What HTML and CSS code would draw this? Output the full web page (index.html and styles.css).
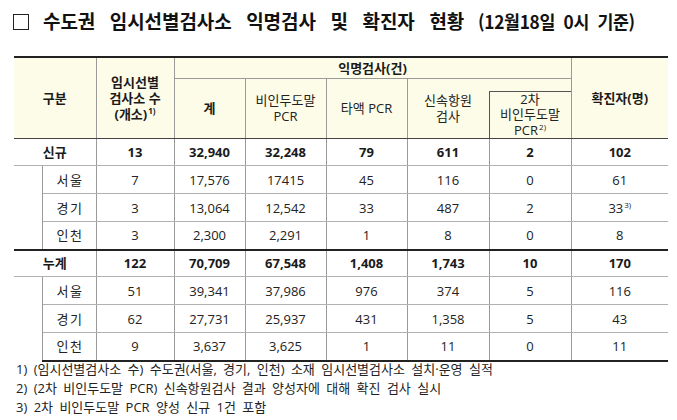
FILE: index.html
```html
<!DOCTYPE html>
<html lang="ko">
<head>
<meta charset="utf-8">
<link rel="stylesheet" href="styles.css">
</head>
<body>
<div class="page">
  <h1 class="title"><span class="box"></span><span class="main">수도권 임시선별검사소 익명검사 및 확진자 현황</span><span class="date">(12월18일 0시 기준)</span></h1>
  <table class="tbl">
    <colgroup>
      <col class="c1"><col class="c2"><col class="c3"><col class="c4"><col class="c5"><col class="c6"><col class="c7"><col class="c8"><col class="c9">
    </colgroup>
    <thead>
      <tr class="ha">
        <th colspan="2" rowspan="3" class="b">구분</th>
        <th rowspan="3" class="b">임시선별<br>검사소 수<br>(개소)<sup>1)</sup></th>
        <th colspan="5" class="b group">익명검사(건)</th>
        <th rowspan="3" class="b last">확진자(명)</th>
      </tr>
      <tr class="hb">
        <th rowspan="2" class="b">계</th>
        <th rowspan="2">비인두도말<br>PCR</th>
        <th rowspan="2">타액 PCR</th>
        <th rowspan="2" class="rapid">신속항원<br>검사</th>
        <th class="blank"></th>
      </tr>
      <tr class="hc">
        <th class="second">2차<br>비인두도말<br>PCR<sup>2)</sup></th>
      </tr>
    </thead>
    <tbody>
      <tr class="sum">
        <td colspan="2">신규</td><td>13</td><td>32,940</td><td>32,248</td><td>79</td><td>611</td><td>2</td><td class="last">102</td>
      </tr>
      <tr>
        <td rowspan="3" class="sp"></td><td class="rg">서울</td><td>7</td><td>17,576</td><td>17415</td><td>45</td><td>116</td><td>0</td><td class="last">61</td>
      </tr>
      <tr>
        <td class="rg">경기</td><td>3</td><td>13,064</td><td>12,542</td><td>33</td><td>487</td><td>2</td><td class="last">33<sup>3)</sup></td>
      </tr>
      <tr>
        <td class="rg">인천</td><td>3</td><td>2,300</td><td>2,291</td><td>1</td><td>8</td><td>0</td><td class="last">8</td>
      </tr>
      <tr class="sum total">
        <td colspan="2">누계</td><td>122</td><td>70,709</td><td>67,548</td><td>1,408</td><td>1,743</td><td>10</td><td class="last">170</td>
      </tr>
      <tr>
        <td rowspan="3" class="sp"></td><td class="rg">서울</td><td>51</td><td>39,341</td><td>37,986</td><td>976</td><td>374</td><td>5</td><td class="last">116</td>
      </tr>
      <tr>
        <td class="rg">경기</td><td>62</td><td>27,731</td><td>25,937</td><td>431</td><td>1,358</td><td>5</td><td class="last">43</td>
      </tr>
      <tr class="end">
        <td class="rg">인천</td><td>9</td><td>3,637</td><td>3,625</td><td>1</td><td>11</td><td>0</td><td class="last">11</td>
      </tr>
    </tbody>
  </table>
  <div class="notes">
    <p>1) (임시선별검사소 수) 수도권(서울, 경기, 인천) 소재 임시선별검사소 설치·운영 실적</p>
    <p>2) (2차 비인두도말 PCR) 신속항원검사 결과 양성자에 대해 확진 검사 실시</p>
    <p>3) 2차 비인두도말 PCR 양성 신규 1건 포함</p>
  </div>
</div>
</body>
</html>
```
FILE: styles.css
```css
html, body {
  margin: 0;
  padding: 0;
  background: #ffffff;
}
body {
  font-family: "Open Sans", "Noto Sans CJK KR", sans-serif;
  color: #222;
}
.page {
  width: 677px;
  height: 420px;
  overflow: hidden;
  padding: 0 0 0 14px;
  box-sizing: border-box;
}
.title {
  margin: 0;
  height: 56px;
  display: flex;
  align-items: flex-start;
  padding-top: 8px;
  box-sizing: border-box;
  font-family: "Noto Sans CJK KR", sans-serif;
  font-weight: 700;
  font-size: 19px;
  line-height: 26px;
  color: #111;
  white-space: nowrap;
}
.box {
  width: 14px;
  height: 14px;
  border: 1.3px solid #222;
  margin: 6px 14px 0 -1px;
  flex: none;
}
.main {
  word-spacing: 9.5px;
  letter-spacing: -0.1px;
}
.date {
  display: inline-block;
  font-size: 18px;
  margin-left: 14px;
  transform: scaleX(0.96);
  transform-origin: left center;
  word-spacing: 4px;
  letter-spacing: -0.3px;
}
.tbl {
  width: 654px;
  table-layout: fixed;
  border-collapse: collapse;
  font-size: 13px;
  line-height: 16px;
}
.c1 { width: 28px; }
.c2 { width: 54px; }
.c3 { width: 78px; }
.c4 { width: 71px; }
.c5 { width: 81px; }
.c6 { width: 81px; }
.c7 { width: 82px; }
.c8 { width: 82px; }
.c9 { width: 97px; }
.tbl th, .tbl td {
  padding: 0;
  text-align: center;
  vertical-align: middle;
  border-left: 1px solid #9a9a9a;
  border-right: 1px solid #9a9a9a;
  border-bottom: 1px solid #b0b0b0;
}
.tbl tr > :first-child { border-left: none; }
.tbl .last { border-right: none; }
.tbl thead th {
  background: #fdfce8;
  font-weight: 400;
  color: #222;
}
.tbl thead th.b { font-weight: 700; color: #1a1a1a; }
.tbl thead tr.ha th { border-top: 2px solid #222; }
.tbl thead th { border-bottom: 1px solid #444; }
.tbl thead th.group { border-bottom: 1px solid #9a9a9a; }
.ha { height: 21px; }
.hb { height: 13px; }
.hc { height: 46px; }
.tbl thead th.rapid { border-right: none; }
.tbl thead th.blank { border-left: none; border-bottom: none; }
.tbl thead th.second { border-left: 1px solid #555; border-top: 1px solid #555; line-height: 15.5px; }
.tbl tbody tr { height: 28px; }
.tbl tbody tr.sum { height: 27px; }
.tbl tbody tr.sum td { font-weight: 700; color: #1a1a1a; }
.tbl tbody tr.sum td:first-child { border-left: none; }
.tbl tbody tr.total td { border-top: 2px solid #222; }
.tbl tbody tr.end td { border-bottom: 2px solid #222; }
.tbl tbody td.sp { border-bottom: none; }
.tbl tbody tr.end td.sp { border-bottom: 2px solid #222; }
.rg {
  font-family: "Noto Sans CJK KR", sans-serif;
  letter-spacing: 1.5px;
  padding-left: 2px !important;
}
sup {
  font-size: 8px;
  line-height: 0;
  vertical-align: 5px;
  margin-left: 1px;
}
.notes {
  margin-top: -2px;
  font-size: 13px;
  line-height: 19px;
  color: #222;
}
.notes p {
  margin: 0;
  padding-left: 2px;
  word-spacing: 3px;
}
```
